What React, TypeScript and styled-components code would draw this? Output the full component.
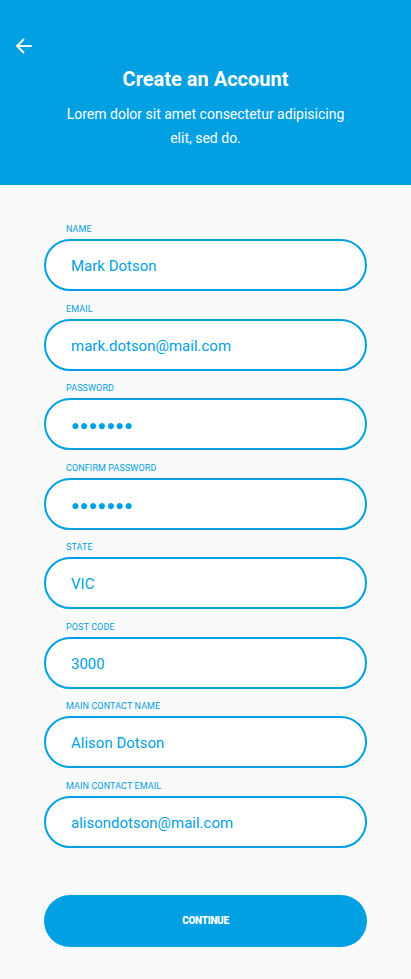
import React from "react";
import styled, { createGlobalStyle } from "styled-components";

const BLUE = "#00a0e3";

const Global = createGlobalStyle`
  html, body { margin: 0; padding: 0; background: #fafafa; }
  body { font-family: Roboto, "Noto Sans", sans-serif; }
  * { box-sizing: border-box; }
`;

const Page = styled.div`
  width: 411px;
  min-height: 979px;
  background: #fafafa;
  display: flex;
  flex-direction: column;
`;

const Header = styled.header`
  position: relative;
  height: 185px;
  background: ${BLUE};
  color: #fff;
  display: flex;
  flex-direction: column;
  align-items: center;
  padding-top: 66px;
`;

const BackButton = styled.button`
  position: absolute;
  left: 12px;
  top: 34px;
  width: 24px;
  height: 24px;
  padding: 0;
  border: 0;
  background: transparent;
  color: #fff;
  display: flex;
  align-items: center;
  justify-content: center;
`;

const Title = styled.h1`
  margin: 0;
  font-size: 20px;
  line-height: 26px;
  font-weight: 700;
`;

const Subtitle = styled.p`
  margin: 10px 0 0;
  font-size: 14px;
  line-height: 24px;
  text-align: center;
  width: 300px;
`;

const Form = styled.form`
  display: flex;
  flex-direction: column;
  padding: 38px 44px 32px;
  gap: 11.5px;
`;

const Field = styled.div`
  display: flex;
  flex-direction: column;
`;

const Label = styled.label`
  font-size: 9px;
  line-height: 12px;
  color: ${BLUE};
  text-transform: uppercase;
  padding-left: 22px;
  margin-bottom: 4px;
  letter-spacing: 0.1px;
`;

const Input = styled.div<{ $secret?: boolean }>`
  height: 52px;
  border: 2px solid ${BLUE};
  border-radius: 26px;
  background: #fff;
  display: flex;
  align-items: center;
  padding-left: 25px;
  padding-top: 2px;
  color: ${BLUE};
  font-size: ${(p) => (p.$secret ? "14px" : "15px")};
  letter-spacing: ${(p) => (p.$secret ? "0.4px" : "0")};
`;

const Button = styled.button`
  margin-top: 35.5px;
  height: 52px;
  border: 0;
  border-radius: 26px;
  background: ${BLUE};
  color: #fff;
  font-family: Roboto, sans-serif;
  font-weight: 900;
  font-size: 10px;
  letter-spacing: -0.3px;
`;

const fields: { label: string; value: string; secret?: boolean }[] = [
  { label: "Name", value: "Mark Dotson" },
  { label: "Email", value: "mark.dotson@mail.com" },
  { label: "Password", value: "●●●●●●●", secret: true },
  { label: "Confirm Password", value: "●●●●●●●", secret: true },
  { label: "State", value: "VIC" },
  { label: "Post Code", value: "3000" },
  { label: "Main Contact Name", value: "Alison Dotson" },
  { label: "Main Contact Email", value: "alisondotson@mail.com" },
];

export default function App() {
  return (
    <Page>
      <Global />
      <Header>
        <BackButton aria-label="Back">
          <svg width="20" height="20" viewBox="0 0 20 20" fill="none" stroke="#fff" strokeWidth="1.8" strokeLinecap="round" strokeLinejoin="round">
            <path d="M17 10H3M9.5 3.5L3 10l6.5 6.5" />
          </svg>
        </BackButton>
        <Title>Create an Account</Title>
        <Subtitle>Lorem dolor sit amet consectetur adipisicing elit, sed do.</Subtitle>
      </Header>
      <Form>
        {fields.map((f) => (
          <Field key={f.label}>
            <Label>{f.label}</Label>
            <Input $secret={f.secret}>{f.value}</Input>
          </Field>
        ))}
        <Button type="button">CONTINUE</Button>
      </Form>
    </Page>
  );
}
